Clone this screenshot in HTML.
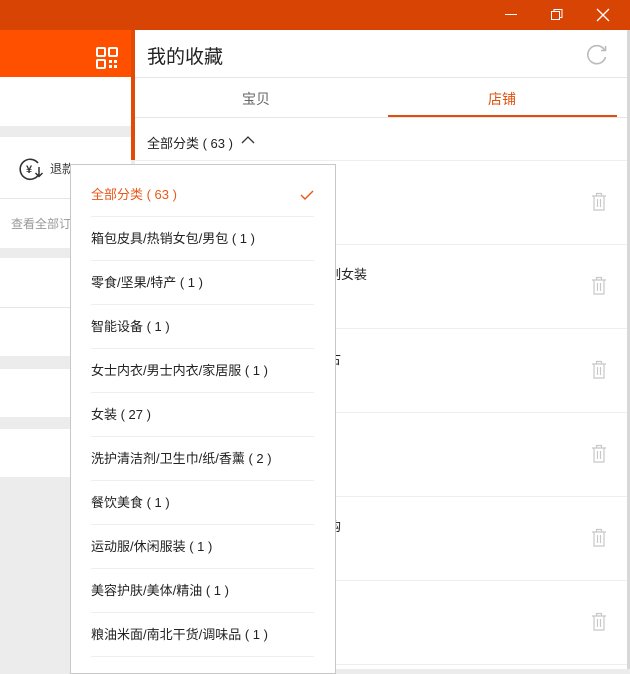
<!DOCTYPE html>
<html><head><meta charset="utf-8"><style>
*{margin:0;padding:0;box-sizing:border-box}
body{width:630px;height:669px;overflow:hidden;position:relative;background:#ececec;font-family:"Liberation Sans","Noto Sans CJK SC",sans-serif;color:#222}
.abs{position:absolute}
.t{position:absolute;white-space:nowrap}
</style></head><body>
<div class="abs" style="left:0;top:0;width:630px;height:30px;background:#d84404"></div>
<div class="abs" style="left:505px;top:14px;width:12px;height:1px;background:#fff"></div>
<svg class="abs" style="left:550px;top:8px" width="14" height="14"><rect x="1.5" y="3.5" width="8" height="8" fill="none" stroke="#fff"/><path d="M4 3.5V1.5h8v8h-2.5" fill="none" stroke="#fff"/></svg>
<svg class="abs" style="left:596px;top:8px" width="14" height="14"><path d="M1 1l12 12M13 1L1 13" stroke="#fff" stroke-width="1.3"/></svg>

<!-- left panel -->
<div class="abs" style="left:0;top:30px;width:131px;height:47px;background:#ff5000"></div>
<svg class="abs" style="left:96px;top:47px" width="22" height="22"><g fill="none" stroke="#fff" stroke-width="2"><rect x="1" y="1" width="8" height="8" rx="1"/><rect x="13" y="1" width="8" height="8" rx="1"/><rect x="1" y="13" width="8" height="8" rx="1"/></g><rect x="13" y="13" width="3" height="3" fill="#fff"/><rect x="18" y="13" width="3" height="3" fill="#fff"/><rect x="13" y="18" width="3" height="3" fill="#fff"/><rect x="18" y="18" width="3" height="3" fill="#fff"/></svg>
<div class="abs" style="left:0;top:77px;width:131px;height:49px;background:#fff"></div>
<div class="abs" style="left:0;top:137px;width:131px;height:111px;background:#fff"></div>
<div class="abs" style="left:0;top:198px;width:131px;height:1px;background:#e6e6e6"></div>
<svg class="abs" style="left:19px;top:157px" width="26" height="24"><path d="M19 6A10 10 0 1 0 20 17" fill="none" stroke="#333" stroke-width="1.6"/><path d="M20 10v9M16.5 16l3.5 3.5 3.5-3.5" fill="none" stroke="#333" stroke-width="1.5"/><text x="7" y="16" font-size="11" font-weight="bold" fill="#333" font-family="Liberation Sans">¥</text></svg>
<div class="t" style="left:50px;top:160px;font-size:12px;color:#333">退款</div>
<div class="t" style="left:11px;top:215px;font-size:12px;color:#999">查看全部订</div>
<div class="abs" style="left:0;top:258px;width:131px;height:98px;background:#fff"></div>
<div class="abs" style="left:0;top:307px;width:131px;height:1px;background:#e6e6e6"></div>
<div class="abs" style="left:0;top:369px;width:131px;height:48px;background:#fff"></div>
<div class="abs" style="left:0;top:429px;width:131px;height:48px;background:#fff"></div>
<div class="abs" style="left:131px;top:30px;width:4px;height:130px;background:#e14b06"></div>

<!-- right panel -->
<div class="abs" style="left:135px;top:30px;width:492px;height:639px;background:#fff"></div>
<div class="abs" style="left:627px;top:30px;width:3px;height:639px;background:#d8d8d8"></div>
<div class="t" style="left:147px;top:42px;font-size:19px;color:#222">我的收藏</div>
<svg class="abs" style="left:585px;top:42px" width="24" height="24"><path d="M19.5 8A9 9 0 1 0 20.5 15" fill="none" stroke="#bbb" stroke-width="1.6"/><path d="M16 8.5h4.5V4" fill="none" stroke="#bbb" stroke-width="1.6"/></svg>
<div class="abs" style="left:135px;top:77px;width:492px;height:1px;background:#e6e6e6"></div>
<div class="t" style="left:242px;top:89px;font-size:14px;color:#666">宝贝</div>
<div class="t" style="left:488px;top:89px;font-size:14px;color:#e1510e">店铺</div>
<div class="abs" style="left:135px;top:117px;width:492px;height:1px;background:#e6e6e6"></div>
<div class="abs" style="left:388px;top:115px;width:229px;height:2px;background:#e54c0b"></div>
<div class="t" style="left:147px;top:133px;font-size:13px;color:#222">全部分类 ( 63 )</div>
<svg class="abs" style="left:241px;top:135px" width="14" height="10"><path d="M1 8l6-6 6 6" fill="none" stroke="#333" stroke-width="1.3"/></svg>
<div class="abs" style="left:135px;top:160px;width:492px;height:1px;background:#eee"></div>
<div class="abs" style="left:135px;top:244px;width:492px;height:1px;background:#eee"></div>
<div class="abs" style="left:135px;top:328px;width:492px;height:1px;background:#eee"></div>
<div class="abs" style="left:135px;top:412px;width:492px;height:1px;background:#eee"></div>
<div class="abs" style="left:135px;top:496px;width:492px;height:1px;background:#eee"></div>
<div class="abs" style="left:135px;top:580px;width:492px;height:1px;background:#eee"></div>
<div class="abs" style="left:135px;top:664px;width:492px;height:1px;background:#eee"></div>
<div class="t" style="left:315px;top:264px;font-size:13px">目制女装</div>
<div class="t" style="left:328px;top:349px;font-size:13px">古</div>
<div class="t" style="left:328px;top:516px;font-size:13px">购</div>

<svg width="0" height="0" style="position:absolute"><defs><g id="tr"><path d="M1 4h14M5.5 4V1.5h5V4M3 4v14h10V4M6.5 7v8M9.5 7v8" fill="none" stroke="#c8c8c8" stroke-width="1.2"/></g></defs></svg>
<svg class="abs" style="left:591px;top:192px" width="16" height="19"><use href="#tr"/></svg>
<svg class="abs" style="left:591px;top:276px" width="16" height="19"><use href="#tr"/></svg>
<svg class="abs" style="left:591px;top:360px" width="16" height="19"><use href="#tr"/></svg>
<svg class="abs" style="left:591px;top:444px" width="16" height="19"><use href="#tr"/></svg>
<svg class="abs" style="left:591px;top:528px" width="16" height="19"><use href="#tr"/></svg>
<svg class="abs" style="left:591px;top:612px" width="16" height="19"><use href="#tr"/></svg>

<!-- dropdown -->
<div class="abs" style="left:70px;top:164px;width:266px;height:510px;background:#fff;border:1px solid #c8c8c8">
<div style="position:absolute;left:20px;top:8px;width:223px">
<div style="height:44px;line-height:44px;font-size:13px;color:#e9581a;border-bottom:1px solid #eee;position:relative">全部分类 ( 63 )<svg style="position:absolute;right:0;top:17px" width="14" height="10"><path d="M1 5l4 4 8-8" fill="none" stroke="#e9581a" stroke-width="1.4"/></svg></div>
<div style="height:44px;line-height:44px;font-size:13px;border-bottom:1px solid #eee">箱包皮具/热销女包/男包 ( 1 )</div>
<div style="height:44px;line-height:44px;font-size:13px;border-bottom:1px solid #eee">零食/坚果/特产 ( 1 )</div>
<div style="height:44px;line-height:44px;font-size:13px;border-bottom:1px solid #eee">智能设备 ( 1 )</div>
<div style="height:44px;line-height:44px;font-size:13px;border-bottom:1px solid #eee">女士内衣/男士内衣/家居服 ( 1 )</div>
<div style="height:44px;line-height:44px;font-size:13px;border-bottom:1px solid #eee">女装 ( 27 )</div>
<div style="height:44px;line-height:44px;font-size:13px;border-bottom:1px solid #eee">洗护清洁剂/卫生巾/纸/香薰 ( 2 )</div>
<div style="height:44px;line-height:44px;font-size:13px;border-bottom:1px solid #eee">餐饮美食 ( 1 )</div>
<div style="height:44px;line-height:44px;font-size:13px;border-bottom:1px solid #eee">运动服/休闲服装 ( 1 )</div>
<div style="height:44px;line-height:44px;font-size:13px;border-bottom:1px solid #eee">美容护肤/美体/精油 ( 1 )</div>
<div style="height:44px;line-height:44px;font-size:13px;border-bottom:1px solid #eee">粮油米面/南北干货/调味品 ( 1 )</div>
</div></div>
</body></html>
